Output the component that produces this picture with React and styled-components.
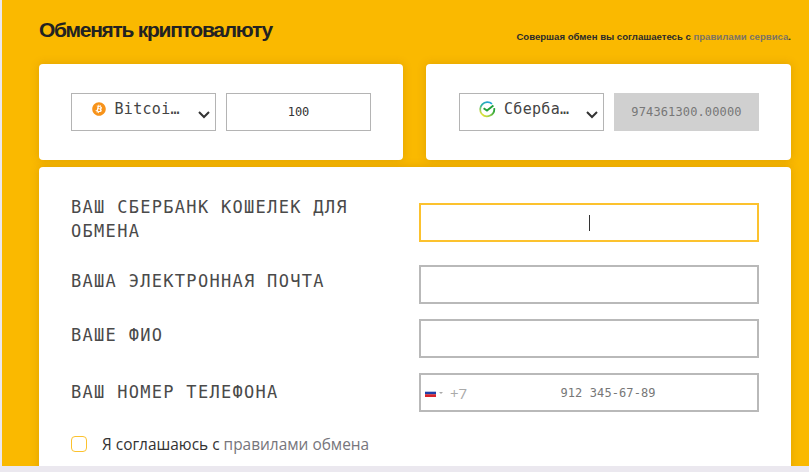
import React from 'react';
import styled, { createGlobalStyle } from 'styled-components';
import { FaBitcoin } from 'react-icons/fa';

const Global = createGlobalStyle`
  html, body { margin: 0; padding: 0; background: #ebe8ef; overflow: hidden; }
  * { box-sizing: border-box; }
`;

const mono = `"DejaVu Sans Mono", "Liberation Mono", monospace`;

const Page = styled.div`
  width: 809px;
  height: 472px;
  padding-left: 2px;
  background: #ebe8ef;
  overflow: hidden;
`;

const Stage = styled.main`
  height: 466px;
  padding: 16px 18px 0 37px;
  background: #fab900;
  overflow: hidden;
`;

const Header = styled.header`
  display: flex;
  justify-content: space-between;
  align-items: flex-end;
  height: 48px;
  padding-bottom: 20px;
`;

const Title = styled.h1`
  margin: 0;
  font: bold 21px/28px "Liberation Sans", Arial, sans-serif;
  letter-spacing: -1.27px;
  color: #222;
`;

const Notice = styled.p`
  margin: 0 0 1px;
  font: bold 9.58px/12px "Liberation Sans", Arial, sans-serif;
  color: #2b2b2b;
`;

const NoticeLink = styled.a`
  color: #7b7466;
`;

const Exchange = styled.section`
  display: grid;
  grid-template-columns: 364px 365px;
  column-gap: 23px;
  margin-bottom: 7px;
`;

const Card = styled.div`
  height: 96px;
  padding: 29px 32px 29px ${(p) => p.$inset || 32}px;
  display: flex;
  gap: 10px;
  background: #fff;
  border-radius: 4px;
  box-shadow: 0 0 10px rgba(120, 70, 0, 0.2);
`;

const Select = styled.div`
  position: relative;
  width: 145px;
  height: 38px;
  padding: 0 32px 6px 18px;
  display: flex;
  align-items: center;
  gap: 8px;
  border: 1.5px solid #b4b4b4;
  background: #fff;
`;

const CoinIcon = styled(FaBitcoin)`
  flex-shrink: 0;
  margin: 0 1px 0 1.5px;
  font-size: 14px;
  color: #f7931a;
`;

const SelectText = styled.span`
  flex: 1;
  min-width: 0;
  overflow: hidden;
  white-space: nowrap;
  text-overflow: ellipsis;
  font: 15px/20px ${mono};
  letter-spacing: 0.3px;
  color: #444;
`;

const Chevron = styled.svg`
  position: absolute;
  right: 4px;
  top: 16px;
  width: 14px;
  height: 9px;
`;

const Amount = styled.div`
  width: 145px;
  height: 38px;
  display: flex;
  align-items: center;
  justify-content: center;
  font: 12px/16px ${mono};
  border: 1.5px solid ${(p) => (p.$readonly ? '#d0d0d0' : '#b4b4b4')};
  background: ${(p) => (p.$readonly ? '#d0d0d0' : '#fff')};
  color: ${(p) => (p.$readonly ? '#777' : '#333')};
  letter-spacing: ${(p) => (p.$readonly ? '0.13px' : '0')};
`;

const FormCard = styled.form`
  width: 752px;
  height: 320px;
  padding: 28px 32px 0;
  background: #fff;
  border-radius: 4px 4px 0 0;
  box-shadow: 0 0 10px rgba(120, 70, 0, 0.2);
`;

const Row = styled.div`
  display: flex;
  align-items: center;
  justify-content: space-between;
  height: ${(p) => p.$height || 39}px;
  margin-bottom: 15px;
`;

const Label = styled.label`
  width: 300px;
  padding-bottom: ${(p) => p.$lift ?? 8}px;
  font: 17px/24px ${mono};
  letter-spacing: 1.3px;
  color: #4a4a4a;
`;

const Field = styled.div`
  position: relative;
  width: 340px;
  height: 39px;
  display: flex;
  align-items: center;
  border: 2px solid ${(p) => (p.$focused ? '#fcc22e' : '#b9b9b9')};
  background: #fff;
`;

const Caret = styled.span`
  position: absolute;
  left: 168px;
  top: 10px;
  width: 1px;
  height: 16px;
  background: #333;
`;

const Flag = styled.svg`
  width: 11px;
  height: 8px;
  margin-left: 4px;
`;

const FlagCaret = styled.span`
  width: 0;
  height: 0;
  margin-left: 3px;
  border-left: 2px solid transparent;
  border-right: 2px solid transparent;
  border-top: 2px solid #aaa;
`;

const Dial = styled.span`
  margin-left: 7px;
  font: 15px/20px "Open Sans", sans-serif;
  color: #aaa;
`;

const Phone = styled.span`
  flex: 1;
  padding-right: 8px;
  text-align: center;
  font: 12px/16px ${mono};
  letter-spacing: 0.1px;
  color: #777;
`;

const Agree = styled.label`
  display: flex;
  align-items: center;
  gap: 15px;
  margin-top: 22px;
  font: 15.45px/20px "Open Sans", sans-serif;
  color: #333;
`;

const Box = styled.span`
  width: 16px;
  height: 16px;
  border: 1.5px solid #fcc22e;
  border-radius: 4px;
`;

const AgreeLink = styled.a`
  color: #77767c;
`;

const ChevronIcon = () => (
  <Chevron viewBox="0 0 14 9" fill="none">
    <path d="M2 2l5 5 5-5" stroke="#333" strokeWidth="2" />
  </Chevron>
);

const SberIcon = () => (
  <svg width="18" height="18" viewBox="0 0 18 18" fill="none" style={{ flexShrink: 0 }}>
    <defs>
      <linearGradient id="sberA" x1="14" y1="2" x2="3" y2="15" gradientUnits="userSpaceOnUse">
        <stop offset="0" stopColor="#1d9fe0" />
        <stop offset="0.55" stopColor="#2fb4a0" />
        <stop offset="1" stopColor="#f2e42e" />
      </linearGradient>
      <linearGradient id="sberB" x1="3" y1="15" x2="16" y2="9" gradientUnits="userSpaceOnUse">
        <stop offset="0" stopColor="#f2e42e" />
        <stop offset="0.5" stopColor="#9ad14a" />
        <stop offset="1" stopColor="#21a038" />
      </linearGradient>
    </defs>
    <path d="M14 3.9A7.2 7.2 0 0 0 3.9 14.1" stroke="url(#sberA)" strokeWidth="1.8" />
    <path d="M3.9 14.1A7.2 7.2 0 0 0 16.2 8.2" stroke="url(#sberB)" strokeWidth="1.8" />
    <path d="M5.6 8.2L9 10.6l6.4-5" stroke="#21a038" strokeWidth="1.9" />
  </svg>
);

export default function App() {
  return (
    <Page>
      <Global />
      <Stage>
        <Header>
          <Title>Обменять криптовалюту</Title>
          <Notice>
            Совершая обмен вы соглашаетесь с <NoticeLink>правилами сервиса</NoticeLink>.
          </Notice>
        </Header>
        <Exchange>
          <Card>
            <Select>
              <CoinIcon />
              <SelectText>Bitcoin (BTC)</SelectText>
              <ChevronIcon />
            </Select>
            <Amount>100</Amount>
          </Card>
          <Card $inset={33}>
            <Select>
              <SberIcon />
              <SelectText>Сбербанк</SelectText>
              <ChevronIcon />
            </Select>
            <Amount $readonly>974361300.00000</Amount>
          </Card>
        </Exchange>
        <FormCard>
          <Row $height={55}>
            <Label>ВАШ СБЕРБАНК КОШЕЛЕК ДЛЯ ОБМЕНА</Label>
            <Field $focused>
              <Caret />
            </Field>
          </Row>
          <Row>
            <Label>ВАША ЭЛЕКТРОННАЯ ПОЧТА</Label>
            <Field />
          </Row>
          <Row>
            <Label>ВАШЕ ФИО</Label>
            <Field />
          </Row>
          <Row>
            <Label $lift={2}>ВАШ НОМЕР ТЕЛЕФОНА</Label>
            <Field>
              <Flag viewBox="0 0 11 8">
                <rect width="11" height="8" fill="#fff" />
                <rect y="2.7" width="11" height="2.7" fill="#1f3fa8" />
                <rect y="5.3" width="11" height="2.7" fill="#d8232a" />
              </Flag>
              <FlagCaret />
              <Dial>+7</Dial>
              <Phone>912 345-67-89</Phone>
            </Field>
          </Row>
          <Agree>
            <Box />
            <span>
              Я соглашаюсь с <AgreeLink>правилами обмена</AgreeLink>
            </span>
          </Agree>
        </FormCard>
      </Stage>
    </Page>
  );
}
